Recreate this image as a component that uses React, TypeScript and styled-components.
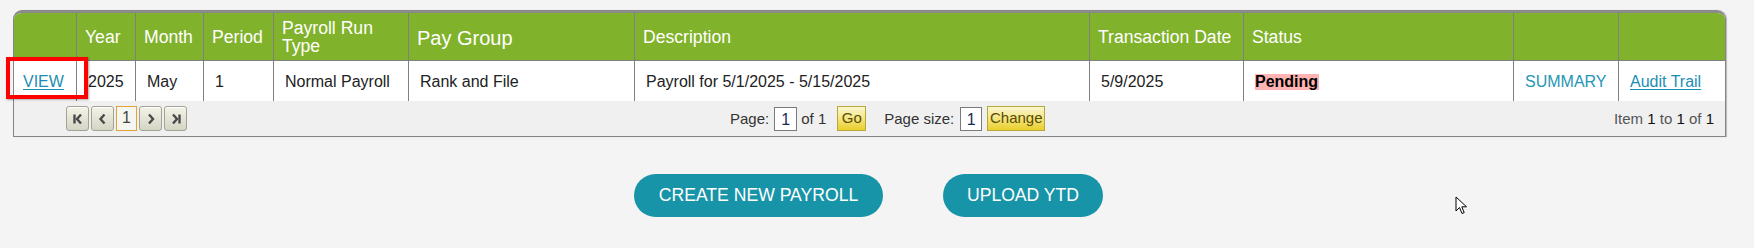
import React from "react";
import styled, { createGlobalStyle } from "styled-components";

const GlobalStyle = createGlobalStyle`
  html, body { margin: 0; padding: 0; }
  body {
    background: #f4f4f4;
    font-family: "Liberation Sans", Arial, sans-serif;
    width: 1754px;
    height: 248px;
    overflow: hidden;
  }
  * { box-sizing: border-box; }
`;

const COLS = "62px 59px 68px 70px 135px 226px 455px 154px 270px 105px 107px";

const Page = styled.div`
  position: relative;
  padding: 10px 0 0 13px;
  height: 248px;
`;

const Panel = styled.div`
  width: 1713px;
  border: 1px solid #858585;
  border-top: 3px solid #8a8a8a;
  border-radius: 9px 9px 0 0;
  overflow: hidden;
  box-shadow: 1px 0 1px rgba(0, 0, 0, 0.25);
`;

const HeaderRow = styled.div`
  display: grid;
  grid-template-columns: ${COLS};
  height: 48px;
  background: #81b22b;
  border-bottom: 1px solid #808080;
`;

const HeaderCell = styled.div<{ $big?: boolean; $first?: boolean }>`
  display: flex;
  align-items: center;
  padding: 3px 0 0 8px;
  border-left: ${(p) => (p.$first ? "none" : "1px solid #808080")};
  color: #ffffff;
  font-size: ${(p) => (p.$big ? "20px" : "17.6px")};
  line-height: 1;
  white-space: pre-line;
`;

const DataRow = styled.div`
  display: grid;
  grid-template-columns: ${COLS};
  height: 40px;
  background: #ffffff;
`;

const DataCell = styled.div<{ $first?: boolean }>`
  display: flex;
  align-items: center;
  padding: 2px 0 0 ${(p) => (p.$first ? "9px" : "11px")};
  border-left: ${(p) => (p.$first ? "none" : "1px solid #808080")};
  color: #222;
  font-size: 16px;
  white-space: nowrap;
`;

const Link = styled.a<{ $plain?: boolean }>`
  color: ${(p) => (p.$plain ? "#2596b4" : "#1c8db3")};
  text-decoration: ${(p) => (p.$plain ? "none" : "underline")};
  text-underline-offset: 2px;
  cursor: pointer;
`;

const StatusBadge = styled.span`
  background: #ffb3b3;
  color: #000;
  font-weight: bold;
  line-height: 16px;
  padding: 0 1px 0 0;
`;

const Pager = styled.div`
  display: grid;
  grid-template-columns: 716px auto 1fr;
  align-items: center;
  height: 35px;
  background: #f0f0f0;
  color: #333;
  font-size: 15px;
`;

const PagerNav = styled.div`
  display: flex;
  align-items: center;
  gap: 2px;
  padding-left: 52px;
`;

const NavButton = styled.div`
  width: 23px;
  height: 25px;
  display: flex;
  align-items: center;
  justify-content: center;
  border: 1px solid #a3a393;
  border-radius: 3px;
  background: linear-gradient(#f3f3e8, #d5d5c5);
  box-shadow: inset 0 1px 0 #ffffff;
`;

const CurrentPage = styled.div`
  width: 21px;
  height: 25px;
  display: flex;
  align-items: flex-start;
  justify-content: center;
  padding-top: 2px;
  border: 1px solid #e0a33c;
  background: #f6f6f0;
  color: #444;
  font-size: 16px;
`;

const PagerMiddle = styled.div`
  display: flex;
  align-items: center;
`;

const PageInput = styled.div<{ $w: number }>`
  width: ${(p) => p.$w}px;
  height: 24px;
  border: 1px solid #7a7a7a;
  background: #fff;
  color: #1c2a55;
  font-size: 16px;
  display: flex;
  align-items: flex-end;
  justify-content: center;
  padding-bottom: 1px;
`;

const YellowButton = styled.div<{ $w: number }>`
  width: ${(p) => p.$w}px;
  height: 25px;
  border: 1px solid #b6a93a;
  background: linear-gradient(#fbf7d0, #f3e378 55%, #e9cf2a);
  color: #5a4b05;
  font-size: 15px;
  display: flex;
  align-items: center;
  justify-content: center;
  padding-bottom: 2px;
`;

const Gap = styled.span<{ $w: number }>`
  display: inline-block;
  width: ${(p) => p.$w}px;
`;

const PagerInfo = styled.div`
  justify-self: end;
  padding-right: 11px;
  color: #555;
  b {
    font-weight: normal;
    color: #111;
  }
`;

const Actions = styled.div`
  display: flex;
  justify-content: center;
  gap: 60px;
  margin-top: 37px;
  padding-right: 30px;
`;

const PillButton = styled.button<{ $w: number }>`
  width: ${(p) => p.$w}px;
  height: 43px;
  border: none;
  border-radius: 22px;
  background: #1894a8;
  color: #ffffff;
  font-family: "Liberation Sans", Arial, sans-serif;
  font-size: 17.6px;
  text-transform: uppercase;
  padding: 0;
  cursor: pointer;
`;

const Highlight = styled.div`
  position: absolute;
  left: 6px;
  top: 57px;
  width: 82px;
  height: 42px;
  border: 4px solid #ff0000;
  box-shadow: 1px 1px 2px rgba(0, 0, 0, 0.35);
  pointer-events: none;
`;

const Cursor = styled.svg`
  position: absolute;
  left: 1455px;
  top: 196px;
`;

const NavIcon = ({ kind }: { kind: "first" | "prev" | "next" | "last" }) => {
  const paths: Record<string, string[]> = {
    first: ["M2.5 1.5v9", "M9 1.5 L5 6 L9 10.5"],
    prev: ["M7.5 1.5 L3.5 6 L7.5 10.5"],
    next: ["M4 1.5 L8 6 L4 10.5"],
    last: ["M9.5 1.5v9", "M3 1.5 L7 6 L3 10.5"],
  };
  return (
    <svg width="12" height="12" viewBox="0 0 12 12">
      {paths[kind].map((d) => (
        <path key={d} d={d} fill="none" stroke="#4a4a4a" strokeWidth="2.4" strokeLinecap="butt" strokeLinejoin="miter" />
      ))}
    </svg>
  );
};

const headers: { label: string; big?: boolean }[] = [
  { label: "" },
  { label: "Year" },
  { label: "Month" },
  { label: "Period" },
  { label: "Payroll Run\nType" },
  { label: "Pay Group", big: true },
  { label: "Description" },
  { label: "Transaction Date" },
  { label: "Status" },
  { label: "" },
  { label: "" },
];

export default function App() {
  return (
    <>
      <GlobalStyle />
      <Page>
        <Panel>
          <HeaderRow>
            {headers.map((h, i) => (
              <HeaderCell key={i} $first={i === 0} $big={h.big}>
                {h.label}
              </HeaderCell>
            ))}
          </HeaderRow>
          <DataRow>
            <DataCell $first>
              <Link>VIEW</Link>
            </DataCell>
            <DataCell>2025</DataCell>
            <DataCell>May</DataCell>
            <DataCell>1</DataCell>
            <DataCell>Normal Payroll</DataCell>
            <DataCell>Rank and File</DataCell>
            <DataCell>Payroll for 5/1/2025 - 5/15/2025</DataCell>
            <DataCell>5/9/2025</DataCell>
            <DataCell>
              <StatusBadge>Pending</StatusBadge>
            </DataCell>
            <DataCell>
              <Link $plain>SUMMARY</Link>
            </DataCell>
            <DataCell>
              <Link>Audit Trail</Link>
            </DataCell>
          </DataRow>
          <Pager>
            <PagerNav>
              <NavButton>
                <NavIcon kind="first" />
              </NavButton>
              <NavButton>
                <NavIcon kind="prev" />
              </NavButton>
              <CurrentPage>1</CurrentPage>
              <NavButton>
                <NavIcon kind="next" />
              </NavButton>
              <NavButton>
                <NavIcon kind="last" />
              </NavButton>
            </PagerNav>
            <PagerMiddle>
              <span>Page:</span>
              <Gap $w={5} />
              <PageInput $w={23}>1</PageInput>
              <Gap $w={4} />
              <span>of 1</span>
              <Gap $w={11} />
              <YellowButton $w={29}>Go</YellowButton>
              <Gap $w={18} />
              <span>Page size:</span>
              <Gap $w={6} />
              <PageInput $w={22}>1</PageInput>
              <Gap $w={5} />
              <YellowButton $w={58}>Change</YellowButton>
            </PagerMiddle>
            <PagerInfo>
              Item <b>1</b> to <b>1</b> of <b>1</b>
            </PagerInfo>
          </Pager>
        </Panel>
        <Actions>
          <PillButton $w={249}>Create New Payroll</PillButton>
          <PillButton $w={160}>Upload YTD</PillButton>
        </Actions>
        <Highlight />
        <Cursor width="13" height="20" viewBox="0 0 13 20">
          <path
            d="M1 1 L1 15 L4.5 11.5 L7 17.5 L9.2 16.6 L6.8 10.8 L11.5 10.8 Z"
            fill="#ffffff"
            stroke="#000000"
            strokeWidth="1"
            strokeLinejoin="miter"
          />
        </Cursor>
      </Page>
    </>
  );
}
